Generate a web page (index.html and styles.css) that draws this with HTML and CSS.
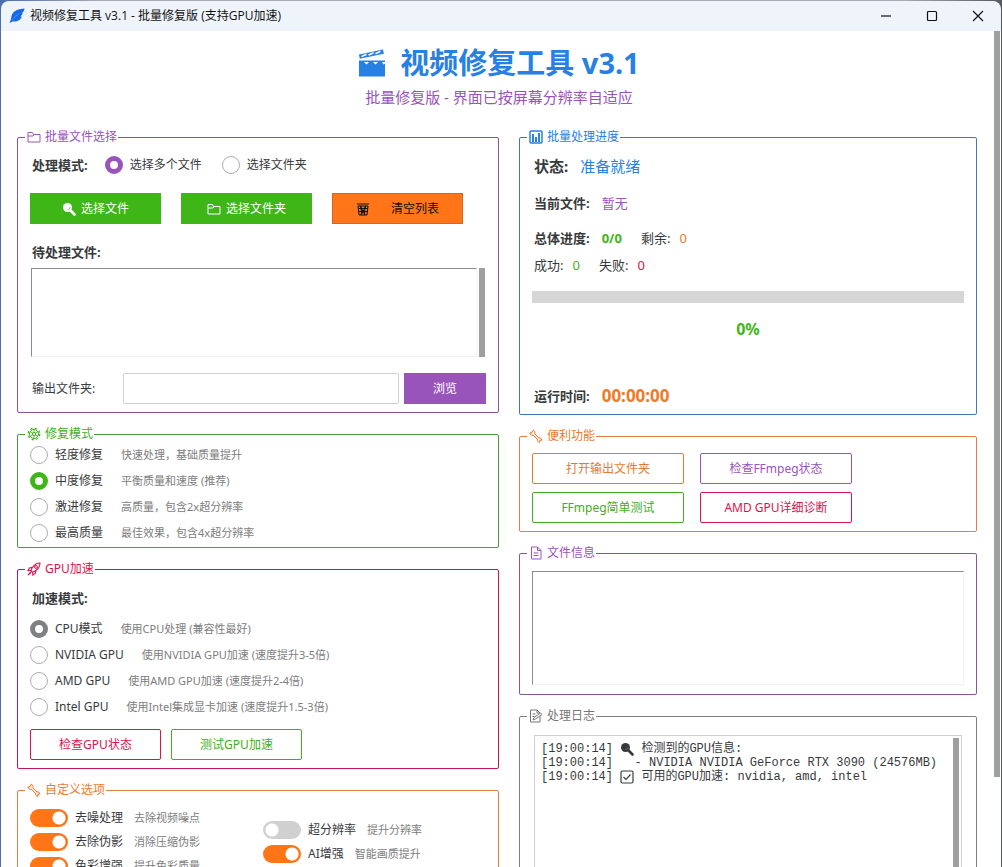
FILE: index.html
```html
<!DOCTYPE html>
<html lang="zh-CN">
<head>
<meta charset="utf-8">
<title>视频修复工具 v3.1</title>
<link rel="stylesheet" href="styles.css">
</head>
<body>
<svg class="sprite" aria-hidden="true">
  <symbol id="i-folder" viewBox="0 0 14 14"><path d="M1 12V2.500h4.500l1 2H13V12zM1 6h5l1-1.500" fill="none" stroke="currentColor"/></symbol>
  <symbol id="i-search" viewBox="0 0 14 14"><circle cx="5.500" cy="5.500" r="4.500" fill="currentColor"/><path d="M8.500 8.500l4 4" stroke="currentColor" stroke-width="2.600" stroke-linecap="round"/><path d="M5.500 7.500a2 2 0 0 0 2.500-2.500" fill="none" stroke="#777" stroke-opacity=".7"/></symbol>
  <symbol id="i-trash" viewBox="0 0 14 14"><path d="M1 2h12M2 4h10l-1 9H3zM2.500 6.500h9M3 9.500h8M5 4l.5 9M9 4l-.5 9M4 4l5 9M10 4l-5 9" fill="none" stroke="currentColor"/></symbol>
  <symbol id="i-chart" viewBox="0 0 14 14"><rect x="1" y="1" width="12" height="12" rx="1" fill="none" stroke="currentColor" stroke-width="1.500"/><path d="M4 12V4M7 12V7M10 12V3" stroke="currentColor" stroke-width="2"/></symbol>
  <symbol id="i-gear" viewBox="0 0 14 14"><circle cx="7" cy="7" r="4.500" fill="none" stroke="currentColor"/><circle cx="7" cy="7" r="1.600" fill="none" stroke="currentColor"/><circle cx="7" cy="7" r="5.800" fill="none" stroke="currentColor" stroke-width="1.200" stroke-dasharray="2.300 2.255"/><path d="M7 2.500v3M7 8.500v3M3.100 4.700l2.600 1.500M8.300 7.800l2.600 1.500M3.100 9.300l2.600-1.500M8.300 6.200l2.600-1.500" stroke="currentColor" stroke-width=".8"/></symbol>
  <symbol id="i-rocket" viewBox="0 0 14 14"><path d="M13 1c-3.500 0-6 1.800-8 5L4 9l1.200 1.200L8 9c3.200-2 5-4.500 5-8zM5.500 5.200L2.500 6 1 8.500l3.200-.3M9 8.500l-.8 3L5.700 13l.2-3M3.500 10L1 13l3-2.500" fill="none" stroke="currentColor" stroke-width="1.100"/><circle cx="9" cy="5" r="1.400" fill="none" stroke="currentColor"/></symbol>
  <symbol id="i-wrench" viewBox="0 0 14 14"><path d="M4.200 1.200L2.900 3.600 1 3.900c.2 2 1.700 2.900 3.300 2.300l4.200 4.200c-.4 1.600.6 2.800 2.300 2.900l.1-1.900 1.900-.2c0-1.800-1.300-2.700-2.900-2.300L5.800 4.700c.6-1.500 0-3-1.600-3.500z" fill="currentColor" fill-opacity=".15" stroke="currentColor"/></symbol>
  <symbol id="i-doc" viewBox="0 0 14 14"><path d="M2.500 1h6l3.500 3.500V13h-9.500zM8.500 1v3.500H12M4.500 7h5M4.500 9.500h5" fill="none" stroke="currentColor"/></symbol>
  <symbol id="i-memo" viewBox="0 0 14 14"><path d="M11 7v6H1.500V1H8l3 3M8 1v3h3M3.500 5h3M3.500 7.500h2M4 11l1-2.500L11.500 4l1.500 1.500L6.500 10z" fill="none" stroke="currentColor"/></symbol>
  <symbol id="i-check" viewBox="0 0 14 14"><rect x="1" y="1" width="12" height="12" rx="1.500" fill="none" stroke="currentColor" stroke-width="1.200"/><path d="M3.500 7l2.500 2.500 4.500-5" fill="none" stroke="currentColor" stroke-width="1.200"/></symbol>
  <symbol id="i-clapper" viewBox="0 0 28 28"><path d="M1 11.500h26v16H1z" fill="currentColor"/><path d="M1 5.500L25 .5l.9 4.300L1.800 9.800z" fill="currentColor"/><path d="M3.500 7.600l5-2.300M10.500 6.100l5-2.300M17.500 4.700l5-2.300" stroke="#fff" stroke-width="1.500"/><path d="M6 13h5l-2.500 2.600zM15 13h5l-2.500 2.600zM24 13h3v1.500l-1.500 1z" fill="#fff"/></symbol>
  <symbol id="i-feather" viewBox="0 0 16 16"><path d="M15.500 .5C10 .8 4 2.500 2.500 8L2 11 .5 15l3-1.500C8 14 12 12 12.800 8.500l-1.300.1L14 5.500l-1.300-.1C14.500 4 15.300 2.500 15.500 .5z" fill="#1769e8"/><path d="M3 12.500C5 9.500 7 7.500 10 5.500" fill="none" stroke="#5c9bf5" stroke-width=".7"/></symbol>
</svg>

<div class="window">
  <header class="titlebar">
    <svg class="app-icon" aria-hidden="true"><use href="#i-feather"/></svg>
    <span class="window-title">视频修复工具 v3.1 - 批量修复版 (支持GPU加速)</span>
    <button class="win-btn" aria-label="最小化"><svg viewBox="0 0 12 12"><path d="M1 6h10"/></svg></button>
    <button class="win-btn" aria-label="最大化"><svg viewBox="0 0 12 12"><rect x="1.500" y="1.500" width="9" height="9" rx="1"/></svg></button>
    <button class="win-btn" aria-label="关闭"><svg viewBox="0 0 12 12"><path d="M1 1l10 10M11 1L1 11"/></svg></button>
  </header>

  <div class="viewport">
    <main class="page">
      <div class="banner">
        <h1><svg class="banner-icon" aria-hidden="true"><use href="#i-clapper"/></svg>视频修复工具 v3.1</h1>
        <p>批量修复版 - 界面已按屏幕分辨率自适应</p>
      </div>

      <div class="columns">
        <div class="stack">
          <fieldset class="panel purple files">
            <legend><svg class="icon" aria-hidden="true"><use href="#i-folder"/></svg>批量文件选择</legend>
            <div class="mode-row">
              <span class="caption">处理模式:</span>
              <label class="choice"><input type="radio" name="pick" class="radio" checked>选择多个文件</label>
              <label class="choice"><input type="radio" name="pick" class="radio">选择文件夹</label>
            </div>
            <div class="actions wide">
              <button class="btn solid-green"><svg class="icon" aria-hidden="true"><use href="#i-search"/></svg>选择文件</button>
              <button class="btn solid-green"><svg class="icon" aria-hidden="true"><use href="#i-folder"/></svg>选择文件夹</button>
              <button class="btn solid-orange"><svg class="icon" aria-hidden="true"><use href="#i-trash"/></svg>清空列表</button>
            </div>
            <label class="caption list-caption" for="queue">待处理文件:</label>
            <div class="list-wrap">
              <select id="queue" class="sunken" size="5"></select>
              <div class="bar"></div>
            </div>
            <div class="output-row">
              <label for="out">输出文件夹:</label>
              <input id="out" type="text" class="field">
              <button class="btn solid-purple">浏览</button>
            </div>
          </fieldset>

          <fieldset class="panel green modes">
            <legend><svg class="icon" aria-hidden="true"><use href="#i-gear"/></svg>修复模式</legend>
            <div class="options">
              <label class="choice"><input type="radio" name="mode" class="radio">轻度修复<small>快速处理，基础质量提升</small></label>
              <label class="choice"><input type="radio" name="mode" class="radio" checked>中度修复<small>平衡质量和速度 (推荐)</small></label>
              <label class="choice"><input type="radio" name="mode" class="radio">激进修复<small>高质量，包含2x超分辨率</small></label>
              <label class="choice"><input type="radio" name="mode" class="radio">最高质量<small>最佳效果，包含4x超分辨率</small></label>
            </div>
          </fieldset>

          <fieldset class="panel red gpu">
            <legend><svg class="icon" aria-hidden="true"><use href="#i-rocket"/></svg>GPU加速</legend>
            <div class="caption">加速模式:</div>
            <div class="options">
              <label class="choice"><input type="radio" name="gpu" class="radio" checked>CPU模式<small>使用CPU处理 (兼容性最好)</small></label>
              <label class="choice"><input type="radio" name="gpu" class="radio">NVIDIA GPU<small>使用NVIDIA GPU加速 (速度提升3-5倍)</small></label>
              <label class="choice"><input type="radio" name="gpu" class="radio">AMD GPU<small>使用AMD GPU加速 (速度提升2-4倍)</small></label>
              <label class="choice"><input type="radio" name="gpu" class="radio">Intel GPU<small>使用Intel集成显卡加速 (速度提升1.5-3倍)</small></label>
            </div>
            <div class="actions">
              <button class="btn outline red">检查GPU状态</button>
              <button class="btn outline green">测试GPU加速</button>
            </div>
          </fieldset>

          <fieldset class="panel orange custom">
            <legend><svg class="icon" aria-hidden="true"><use href="#i-wrench"/></svg>自定义选项</legend>
            <div class="toggles">
              <div>
                <label class="switch"><input type="checkbox" class="toggle" checked>去噪处理<small>去除视频噪点</small></label>
                <label class="switch"><input type="checkbox" class="toggle" checked>去除伪影<small>消除压缩伪影</small></label>
                <label class="switch"><input type="checkbox" class="toggle" checked>色彩增强<small>提升色彩质量</small></label>
              </div>
              <div>
                <label class="switch"><input type="checkbox" class="toggle">超分辨率<small>提升分辨率</small></label>
                <label class="switch"><input type="checkbox" class="toggle" checked>AI增强<small>智能画质提升</small></label>
              </div>
            </div>
          </fieldset>
        </div>

        <div class="stack">
          <fieldset class="panel blue progress-panel">
            <legend><svg class="icon" aria-hidden="true"><use href="#i-chart"/></svg>批量处理进度</legend>
            <div class="line status"><b>状态:</b><span class="t-blue">准备就绪</span></div>
            <div class="line current"><b>当前文件:</b><span class="t-purple">暂无</span></div>
            <div class="line total"><b>总体进度:</b><b class="t-green">0/0</b><span class="pair">剩余: <span class="t-orange">0</span></span></div>
            <div class="line results"><span class="pair">成功: <span class="t-green">0</span></span><span class="pair">失败: <span class="t-red">0</span></span></div>
            <progress max="100" value="0" aria-label="总体进度"></progress>
            <div class="percent t-green">0%</div>
            <div class="line time"><b>运行时间:</b><b class="t-orange clock">00:00:00</b></div>
          </fieldset>

          <fieldset class="panel orange tools">
            <legend><svg class="icon" aria-hidden="true"><use href="#i-wrench"/></svg>便利功能</legend>
            <div class="tool-grid">
              <button class="btn outline orange">打开输出文件夹</button>
              <button class="btn outline purple">检查FFmpeg状态</button>
              <button class="btn outline green">FFmpeg简单测试</button>
              <button class="btn outline red">AMD GPU详细诊断</button>
            </div>
          </fieldset>

          <fieldset class="panel purple info">
            <legend><svg class="icon" aria-hidden="true"><use href="#i-doc"/></svg>文件信息</legend>
            <textarea class="sunken" aria-label="文件信息"></textarea>
          </fieldset>

          <fieldset class="panel gray log-panel">
            <legend><svg class="icon" aria-hidden="true"><use href="#i-memo"/></svg>处理日志</legend>
            <div class="log" role="log">
              <div class="log-lines">
                <div class="entry">[19:00:14] <svg class="icon" aria-hidden="true"><use href="#i-search"/></svg> 检测到的GPU信息:</div>
                <div class="entry">[19:00:14]   - NVIDIA NVIDIA GeForce RTX 3090 (24576MB)</div>
                <div class="entry">[19:00:14] <svg class="icon" aria-hidden="true"><use href="#i-check"/></svg> 可用的GPU加速: nvidia, amd, intel</div>
              </div>
              <div class="bar"></div>
            </div>
          </fieldset>
        </div>
      </div>
    </main>
    <div class="scrollbar"><div class="thumb"></div></div>
  </div>
</div>
</body>
</html>
```
FILE: styles.css
```css
:root {
  --purple: #9954bb;
  --green: #3fb618;
  --orange: #ff7518;
  --blue: #2780e3;
  --ink: #373a3c;
  --bar: #9f9f9f;
}

* { box-sizing: border-box; }

body {
  margin: 0;
  height: 100vh;
  overflow: hidden;
  background: linear-gradient(90deg, #4a6fb0, #a8abb3 10%, #a8abb3 90%, #55585e);
  color: var(--ink);
  font: 12px/18px "Noto Sans", "Noto Sans CJK SC", sans-serif;
}

button, input, select, textarea { font: inherit; color: inherit; margin: 0; }
.sprite { position: absolute; width: 0; height: 0; }
.icon { width: 14px; height: 14px; flex: none; }

.window {
  display: flex;
  flex-direction: column;
  height: 100vh;
  padding: 1px 1px 0;
}

.titlebar {
  display: flex;
  align-items: center;
  flex: none;
  height: 30px;
  padding-left: 8px;
  border-radius: 8px 8px 0 0;
  background: #eff4fb;
  color: #111;
}
.app-icon { width: 16px; height: 16px; }
.window-title { flex: 1; padding-left: 5px; font-family: "Open Sans", "Noto Sans CJK SC", sans-serif; }
.win-btn { width: 46px; height: 30px; padding: 0; border: 0; background: none; }
.win-btn svg { display: block; width: 12px; height: 12px; margin: auto; fill: none; stroke: #111; stroke-width: 1.2; }

.viewport { display: flex; flex: 1; min-height: 0; overflow: hidden; background: #fff; }
.page { flex: 1; padding: 0 17px 0 16px; }
.scrollbar { width: 7px; padding-right: 1px; }
.thumb { height: 746px; max-height: 90%; background: var(--bar); }

.banner { padding: 12px 0 20px 4px; text-align: center; }
h1 {
  display: flex;
  justify-content: center;
  align-items: center;
  gap: 14px;
  margin: 0;
  font-size: 29px;
  line-height: 40px;
  color: var(--blue);
}
.banner-icon { width: 28px; height: 28px; }
.banner p { margin: 2px 0 0; font-size: 15px; line-height: 24px; color: var(--purple); }

.columns { display: grid; grid-template-columns: 482fr 458fr; gap: 20px; }
.stack { display: flex; flex-direction: column; gap: 13px; min-width: 0; }

.panel { min-width: 0; margin: 0; padding: 1px 12px 8px; border: 1px solid; border-radius: 2px; }
.panel.purple { border-color: #865594; }
.panel.green { border-color: #489c35; }
.panel.red { border-color: #bf1556; }
.panel.orange { border-color: #e08045; }
.panel.blue { border-color: #3f78b2; }
.panel.gray { border-color: #808080; }
legend { display: flex; align-items: center; gap: 4px; height: 16px; margin-left: -5px; padding: 0 1px 0 2px; line-height: 16px; }
.purple > legend { color: #9954bb; }
.green > legend { color: #3fae20; }
.red > legend { color: #d8144c; }
.orange > legend { color: #ec7a30; }
.blue > legend { color: #2780e3; }
.gray > legend { color: #777; }

.caption { padding-left: 2px; font-size: 13px; line-height: 20px; font-weight: bold; }
.choice { display: flex; align-items: center; }
small { font-size: 11px; color: #7d7d7d; }
.choice small { padding-left: 18px; }

.radio {
  appearance: none;
  flex: none;
  width: 18px;
  height: 18px;
  margin-right: 7px;
  border: 1px solid #adadad;
  border-radius: 50%;
  background: #fff;
}
.radio:checked { border: 5px solid currentColor; }
.files .radio:checked { border-color: var(--purple); }
.modes .radio:checked { border-color: var(--green); }
.gpu .radio:checked { border-color: #7e8081; }

.btn {
  display: flex;
  align-items: center;
  justify-content: center;
  gap: 5px;
  height: 31px;
  padding: 0 8px;
  border: 1px solid transparent;
  white-space: nowrap;
}
.solid-green { background: var(--green); color: #fff; }
.solid-orange { gap: 21px; background: var(--orange); border-color: #cf6926; color: #111; }
.solid-purple { background: var(--purple); color: #fff; }
.outline { border-color: currentColor; border-radius: 2px; background: #fff; }
.outline.red { color: #d8144c; }
.outline.green { color: #3fae20; }
.outline.orange { color: #e47a34; }
.outline.purple { color: #9954bb; }
.actions { display: flex; gap: 10px; }
.actions.wide { gap: 20px; }
.actions .btn { width: 131px; }

.mode-row { display: flex; align-items: center; height: 20px; margin: 9px 0 18px; }
.mode-row .choice { margin-left: 17px; }
.mode-row .choice + .choice { margin-left: 20px; }
.list-caption { display: block; margin-top: 18px; }
.list-wrap { display: flex; gap: 2px; height: 89px; margin-top: 6px; padding: 0 1px; }
.sunken { border: 1px solid; border-color: #8c8c8c #f4f4f4 #eee #8c8c8c; border-radius: 0; background: #fff; }
.list-wrap .sunken { flex: 1; min-width: 0; height: 89px; }
.bar { width: 6px; background: var(--bar); }
.output-row { display: flex; align-items: center; margin-top: 16px; }
.output-row label { width: 93px; padding-left: 2px; }
.field { flex: 1; min-width: 0; height: 31px; margin-right: 5px; border: 1px solid #d0d0d0; border-radius: 2px; }
.output-row .btn { width: 82px; }

.modes { padding-bottom: 2px; }
.options { display: grid; gap: 2px; }
.options .choice { height: 24px; }

.gpu > .caption { margin: 10px 0 9px; }
.gpu .actions { margin-top: 10px; }

.toggles { display: grid; grid-template-columns: 233px 1fr; align-items: center; padding-top: 7px; }
.switch { display: flex; align-items: center; height: 24px; }
.switch small { padding-left: 11px; }
.toggle {
  appearance: none;
  flex: none;
  width: 38px;
  height: 18px;
  margin-right: 7px;
  border-radius: 9px;
  background: radial-gradient(circle at 9px 9px, #fff 6px, #d0d0d0 7px);
}
.toggle:checked { background: radial-gradient(circle at 29px 9px, #fff 6px, var(--orange) 7px); }

.line { display: flex; align-items: center; height: 22px; padding-left: 2px; font-size: 13px; }
.line > * + * { margin-left: 12px; }
.line > .pair + .pair, .total > .pair { margin-left: 19px; }
.pair { display: flex; gap: 9px; }
.status { margin-top: 9px; font-size: 15px; }
.current { margin-top: 15px; }
.total { margin-top: 13px; }
.results { margin-top: 5px; }
progress { appearance: none; display: block; width: 100%; height: 12px; margin: 15px 0; border: 0; background: #d6d6d6; }
progress::-webkit-progress-bar { background: #d6d6d6; }
progress::-webkit-progress-value { background: var(--green); }
.percent { font-size: 16px; line-height: 22px; font-weight: bold; text-align: center; }
.time { margin-top: 45px; }
.clock { font-size: 17px; }
.progress-panel { padding-bottom: 7px; }
.t-blue { color: var(--blue); }
.t-purple { color: var(--purple); }
.t-green { color: var(--green); }
.t-orange { color: #f07a26; }
.t-red { color: #e0103f; }

.tool-grid { display: grid; grid-template-columns: 152px 152px; gap: 8px 16px; padding-top: 8px; }
.info { padding-bottom: 9px; }
.info textarea { display: block; width: 100%; height: 114px; margin-top: 9px; resize: none; }

.log { display: flex; height: 220px; margin: 10px 2px 0; padding: 2px; border: 1px solid #cfcfcf; }
.log-lines { flex: 1; padding: 4px; font: 12px/14px "Liberation Mono", "Noto Sans CJK SC", monospace; }
.entry { display: flex; align-items: center; height: 14px; white-space: pre; }
```
